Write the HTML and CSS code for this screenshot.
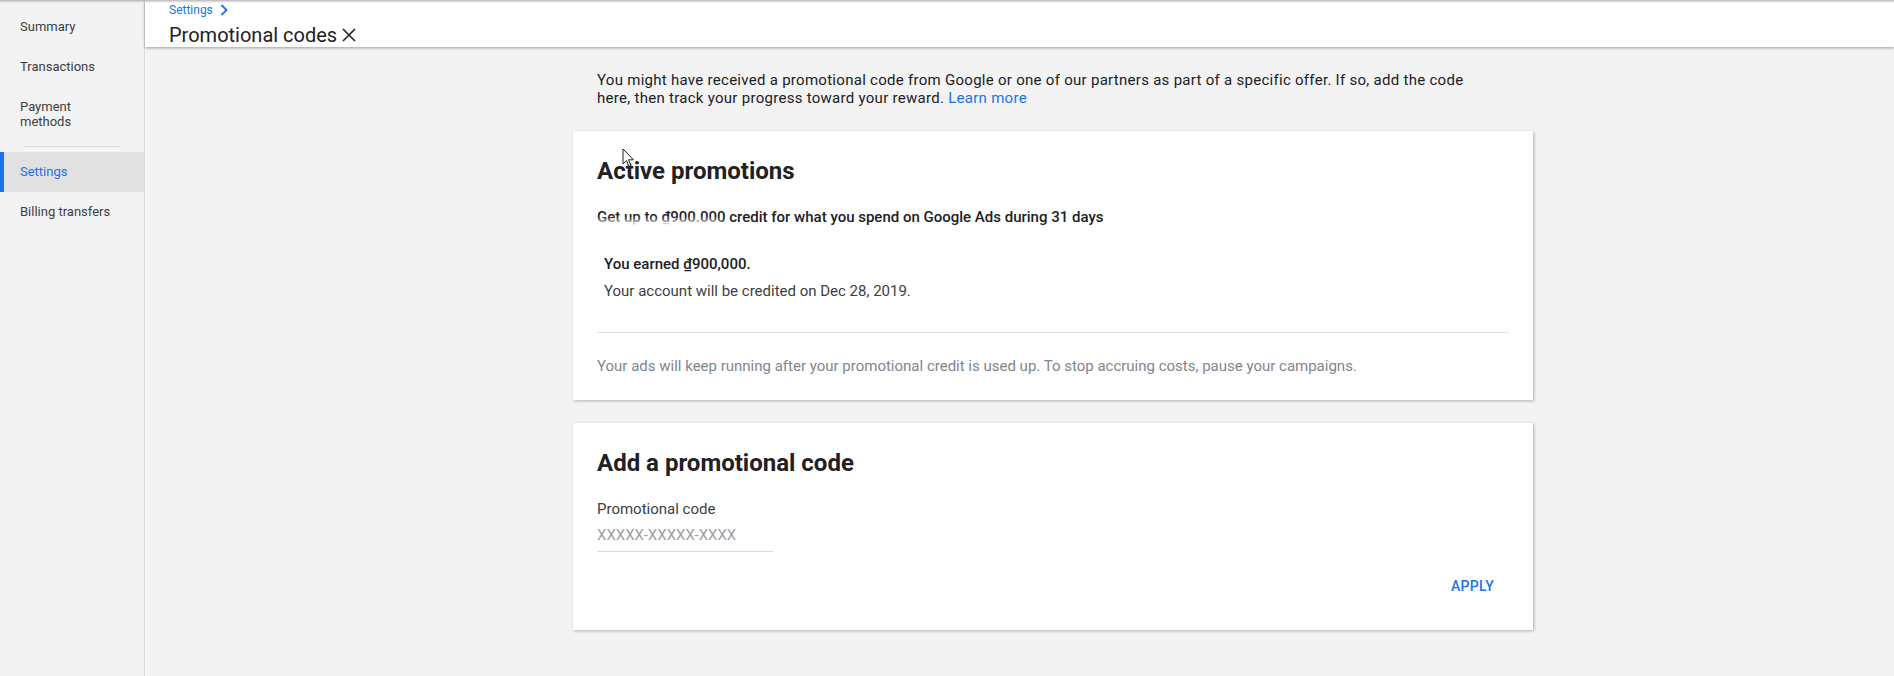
FILE: index.html
```html
<!DOCTYPE html>
<html>
<head>
<meta charset="utf-8">
<link rel="stylesheet" href="styles.css">
</head>
<body>
<div class="topshade"></div>
<div class="app">
  <nav class="sidebar">
    <div class="nav-item">Summary</div>
    <div class="nav-item">Transactions</div>
    <div class="nav-item two">Payment<br>methods</div>
    <div class="nav-divider"></div>
    <div class="nav-item active">Settings</div>
    <div class="nav-item">Billing transfers</div>
  </nav>
  <div class="main">
    <header class="header">
      <div class="crumb">Settings
        <svg class="chev" width="10" height="14" viewBox="0 0 10 14"><path d="M2.5 2 L7.5 7 L2.5 12" fill="none" stroke="#1a73e8" stroke-width="1.8"/></svg>
      </div>
      <div class="title">Promotional codes
        <svg class="close" width="16" height="16" viewBox="0 0 16 16"><path d="M2 2 L14 14 M14 2 L2 14" stroke="#202124" stroke-width="1.6"/></svg>
      </div>
    </header>
    <div class="content">
      <p class="intro">You might have received a promotional code from Google or one of our partners as part of a specific offer. If so, add the code here, then track your progress toward your reward. <a class="link">Learn more</a></p>

      <section class="card">
        <h2 class="card-title">Active promotions</h2>
        <div class="offer">Get up to ₫900.000 credit for what you spend on Google Ads during 31 days<span class="smudge"></span></div>
        <div class="earned">
          <div class="earned-amount">You earned ₫900,000.</div>
          <div class="earned-date">Your account will be credited on Dec 28, 2019.</div>
        </div>
        <div class="divider"></div>
        <div class="note">Your ads will keep running after your promotional credit is used up. To stop accruing costs, pause your campaigns.</div>
        <svg class="cursor" width="13" height="20" viewBox="0 0 13 20"><path d="M1 1 L1 16 L4.5 12.5 L7 18.5 L9 17.6 L6.6 11.8 L11.5 11.8 Z" fill="#fff" stroke="#222" stroke-width="1"/></svg>
      </section>

      <section class="card">
        <h2 class="card-title">Add a promotional code</h2>
        <div class="field-label">Promotional code</div>
        <div class="field-input">XXXXX-XXXXX-XXXX</div>
        <div class="actions"><span class="btn">APPLY</span></div>
      </section>
    </div>
  </div>
</div>
</body>
</html>
```

FILE: styles.css
```css
html, body {
  margin: 0;
  padding: 0;
  height: 100%;
}
body {
  background: #f3f3f3;
  font-family: Roboto, "Noto Sans", Arial, sans-serif;
  color: #202124;
  overflow: hidden;
  position: relative;
}
.topshade {
  position: absolute;
  left: 0;
  top: 0;
  right: 0;
  height: 3px;
  background: linear-gradient(#b8b8b8, rgba(200,200,200,0));
  z-index: 5;
}
.app {
  display: flex;
  height: 676px;
}
.sidebar {
  width: 144px;
  flex: none;
  border-right: 1px solid #dadada;
  background: #f3f3f3;
  padding-top: 7px;
  box-sizing: content-box;
}
.nav-item {
  padding: 12px 20px;
  font-size: 13px;
  line-height: 16px;
  color: #3c4043;
}
.nav-item.two {
  line-height: 15px;
}
.nav-item.active {
  background: #e1e1e1;
  color: #1a73e8;
  box-shadow: inset 4px 0 0 #1a73e8;
}
.nav-divider {
  height: 1px;
  background: #dadada;
  margin: 5px 24px 5px 24px;
}
.main {
  flex: 1;
  display: flex;
  flex-direction: column;
}
.header {
  background: #fff;
  height: 47px;
  box-sizing: border-box;
  padding-left: 24px;
  padding-top: 2px;
  box-shadow: 0 1px 3px rgba(0,0,0,0.35);
  position: relative;
  z-index: 2;
}
.crumb {
  font-size: 12px;
  line-height: 16px;
  color: #1a73e8;
  display: flex;
  align-items: center;
}
.chev {
  margin-left: 6px;
}
.title {
  margin-top: 5px;
  font-size: 20px;
  line-height: 24px;
  color: #202124;
  display: flex;
  align-items: center;
}
.close {
  margin-left: 4px;
}
.content {
  margin-left: 428px;
  width: 960px;
  padding-top: 24px;
}
.intro {
  margin: 0;
  padding: 0 24px;
  width: 885px;
  font-size: 15px;
  line-height: 18px;
  font-weight: 400;
  letter-spacing: 0.28px;
  color: #202124;
}
.link {
  color: #1a73e8;
  text-decoration: none;
}
.card {
  background: #fff;
  margin-top: 24px;
  padding: 24px;
  box-shadow: 1px 1px 3px rgba(0,0,0,0.28);
  position: relative;
}
.card + .card {
  margin-top: 23px;
  padding-bottom: 26px;
}
.card-title {
  margin: 0;
  font-size: 24px;
  line-height: 32px;
  font-weight: 700;
  color: #202124;
}
.offer {
  margin-top: 20px;
  font-size: 15px;
  line-height: 20px;
  font-weight: 500;
  position: relative;
}
.smudge {
  position: absolute;
  left: -6px;
  top: 14px;
  width: 130px;
  height: 16px;
  background: #fff;
  filter: blur(3px);
}
.earned {
  margin-top: 27px;
  padding-left: 7px;
  font-size: 15px;
  line-height: 20px;
}
.earned-amount {
  font-weight: 500;
}
.earned-date {
  margin-top: 7px;
  color: #3c4043;
}
.divider {
  height: 1px;
  background: #e0e0e0;
  margin-top: 31px;
}
.note {
  margin-top: 23px;
  font-size: 15px;
  line-height: 20px;
  color: #80868b;
}
.cursor {
  position: absolute;
  left: 49px;
  top: 17px;
}
.field-label {
  margin-top: 20px;
  font-size: 15px;
  line-height: 20px;
  color: #3c4043;
}
.field-input {
  margin-top: 6px;
  width: 176px;
  font-size: 15px;
  line-height: 20px;
  padding-bottom: 6px;
  color: #9aa0a6;
  border-bottom: 1px solid #dadce0;
}
.actions {
  display: flex;
  justify-content: flex-end;
  margin-top: 16px;
}
.btn {
  display: inline-flex;
  align-items: center;
  height: 36px;
  padding: 0 15px;
  font-size: 14px;
  font-weight: 500;
  color: #1a73e8;
  letter-spacing: 0.3px;
}
```
